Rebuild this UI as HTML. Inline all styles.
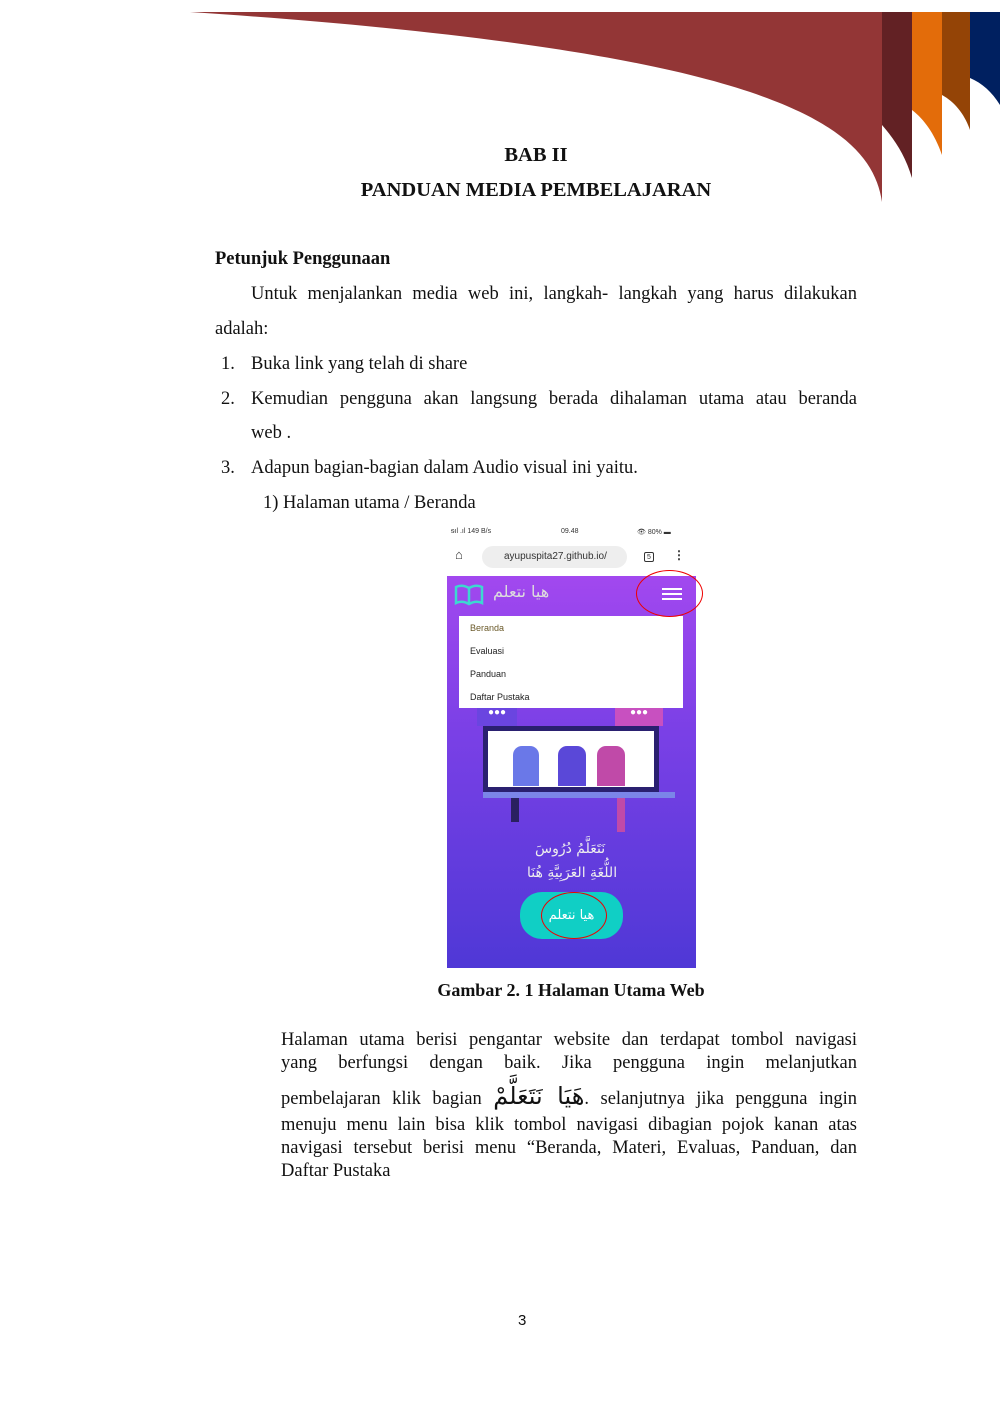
<!DOCTYPE html>
<html><head><meta charset="utf-8"><style>
*{margin:0;padding:0;box-sizing:border-box}
body{width:1000px;height:1414px;background:#fff;position:relative;font-family:"Liberation Serif",serif;font-size:18.5px;color:#111;overflow:hidden}
.a{position:absolute;white-space:nowrap}
.c{position:absolute;left:215px;width:642px;text-align:center;font-weight:bold;font-size:20.5px}
.j{position:absolute;left:281px;width:576px;text-align:justify;text-align-last:justify;white-space:nowrap}
.ar{font-family:"DejaVu Sans",sans-serif}
</style></head><body>
<svg class="a" style="left:0;top:0" width="1000" height="220">
<path d="M190,12 L882,12 L882,202 C870,120 760,50 190,12 Z" fill="#933636"/>
<path d="M882,12 H912 V178 C905,155 895,140 882,125 Z" fill="#622124"/>
<path d="M912,12 H942 V155 C935,135 925,120 912,110 Z" fill="#e36c0a"/>
<path d="M942,12 H970 V130 C965,115 955,102 942,95 Z" fill="#944406"/>
<path d="M970,12 H1000 V105 C992,92 982,83 970,78 Z" fill="#002060"/>
</svg>
<div class="c" style="top:144px">BAB II</div>
<div class="c" style="top:179px">PANDUAN MEDIA PEMBELAJARAN</div>
<div class="a" style="left:215px;top:249px;font-weight:bold">Petunjuk Penggunaan</div>
<div class="a" style="left:251px;top:284px;width:606px;text-align:justify;text-align-last:justify">Untuk menjalankan media web ini, langkah- langkah yang harus dilakukan</div>
<div class="a" style="left:215px;top:319px">adalah:</div>
<div class="a" style="left:221px;top:354px">1.</div><div class="a" style="left:251px;top:354px">Buka link yang telah di share</div>
<div class="a" style="left:221px;top:389px">2.</div><div class="a" style="left:251px;top:389px;width:606px;text-align:justify;text-align-last:justify">Kemudian pengguna akan langsung berada dihalaman utama atau beranda</div>
<div class="a" style="left:251px;top:423px">web .</div>
<div class="a" style="left:221px;top:458px">3.</div><div class="a" style="left:251px;top:458px">Adapun bagian-bagian dalam Audio visual ini yaitu.</div>
<div class="a" style="left:263px;top:493px">1) Halaman utama / Beranda</div>

<div class="a" style="left:447px;top:525px;width:249px;height:443px;font-family:'Liberation Sans',sans-serif;overflow:hidden">
 <div style="height:51px;background:#fff;position:relative;font-size:7px;color:#333">
  <span class="a" style="left:4px;top:3px">ᵴıl .ıl 149 B/s</span><span class="a" style="left:114px;top:3px">09.48</span><span class="a" style="left:190px;top:3px">👁 80% ▬</span>
  <span class="a" style="left:8px;top:22px;font-size:13px">⌂</span>
  <div class="a" style="left:35px;top:21px;width:145px;height:22px;border-radius:11px;background:#eee;font-size:10px;line-height:22px;padding-left:22px;color:#333">ayupuspita27.github.io/</div>
  <div class="a" style="left:197px;top:27px;width:10px;height:10px;border:1px solid #333;border-radius:2px;font-size:7px;text-align:center;line-height:9px">5</div>
  <span class="a" style="left:226px;top:23px;font-size:12px;font-weight:bold">⋮</span>
 </div>
 <div style="height:392px;background:linear-gradient(#a248ef,#7a40e6 40%,#4f38d6);position:relative">
  <svg class="a" style="left:7px;top:8px" width="30" height="22"><path d="M2,3 Q8,0 15,4 Q22,0 28,3 V19 Q22,16 15,20 Q8,16 2,19Z M15,4V20" fill="none" stroke="#3cd8d0" stroke-width="2.5"/></svg>
  <span class="a ar" style="left:46px;top:6px;color:#ddd;font-size:16px">هيا نتعلم</span>
  <div class="a" style="left:215px;top:12px;width:20px;height:2px;background:#fff;box-shadow:0 5px #fff,0 10px #fff"></div>
  <div class="a" style="left:12px;top:40px;width:224px;height:92px;background:#fff;font-size:9px;color:#222">
   <div class="a" style="left:11px;top:7px;color:#6b5a2a">Beranda</div><div class="a" style="left:11px;top:30px">Evaluasi</div><div class="a" style="left:11px;top:53px">Panduan</div><div class="a" style="left:11px;top:76px">Daftar Pustaka</div>
  </div>
  <div class="a" style="left:30px;top:132px;width:40px;height:18px;background:#6a45e0;color:#fff;font-size:10px;text-align:center;line-height:10px">●●●</div>
  <div class="a" style="left:168px;top:132px;width:48px;height:18px;background:#c850c0;color:#fff;font-size:10px;text-align:center;line-height:10px">●●●</div>
  <div class="a" style="left:36px;top:150px;width:176px;height:66px;background:#fff;border:5px solid #2a2070"></div>
  <div class="a" style="left:120px;top:155px;width:0;height:0;border-left:12px solid #fff;border-top:8px solid transparent;border-bottom:8px solid transparent"></div>
  <div class="a" style="left:66px;top:170px;width:26px;height:40px;background:#6a78e8;border-radius:9px 9px 0 0"></div>
  <div class="a" style="left:111px;top:170px;width:28px;height:40px;background:#5a48d8;border-radius:9px 9px 0 0"></div>
  <div class="a" style="left:150px;top:170px;width:28px;height:40px;background:#c04aa8;border-radius:9px 9px 0 0"></div>
  <div class="a" style="left:36px;top:216px;width:192px;height:6px;background:#7b85e8"></div>
  <div class="a" style="left:64px;top:222px;width:8px;height:24px;background:#2a2060"></div>
  <div class="a" style="left:170px;top:222px;width:8px;height:34px;background:#c04aa8"></div>
  <div class="a ar" style="left:88px;top:265px;color:#eee;font-size:14px">نَتَعَلَّمُ دُرُوسَ</div>
  <div class="a ar" style="left:80px;top:289px;color:#eee;font-size:14px">اللُّغَةِ العَرَبِيَّةِ هُنَا</div>
  <div class="a ar" style="left:73px;top:316px;width:103px;height:47px;border-radius:22px;background:#10cfc5;color:#fff;font-size:13px;text-align:center;line-height:47px">هيا نتعلم</div>
  <div class="a" style="left:94px;top:316px;width:66px;height:47px;border:1px solid #e00;border-radius:50%"></div>
 </div>
</div>
<div class="a" style="left:636px;top:570px;width:67px;height:47px;border:1px solid #e00;border-radius:50%"></div>

<div class="a" style="left:371px;width:400px;text-align:center;top:980px;font-size:18px;font-weight:bold">Gambar 2. 1 Halaman Utama Web</div>
<div class="j" style="top:1030px">Halaman utama berisi pengantar website dan terdapat tombol navigasi</div>
<div class="j" style="top:1053px">yang berfungsi dengan baik. Jika pengguna ingin melanjutkan</div>
<div class="j" style="top:1080px;height:30px;line-height:38px">pembelajaran klik bagian <span class="ar" style="font-size:24px;line-height:20px">هَيَا نَتَعَلَّمْ</span>. selanjutnya jika pengguna ingin</div>
<div class="j" style="top:1115px">menuju menu lain bisa klik tombol navigasi dibagian pojok kanan atas</div>
<div class="j" style="top:1138px">navigasi tersebut berisi menu “Beranda, Materi, Evaluas, Panduan, dan</div>
<div class="a" style="left:281px;top:1161px">Daftar Pustaka</div>
<div class="a" style="left:518px;top:1312px;font-family:'Liberation Sans',sans-serif;font-size:15px">3</div>
</body></html>
